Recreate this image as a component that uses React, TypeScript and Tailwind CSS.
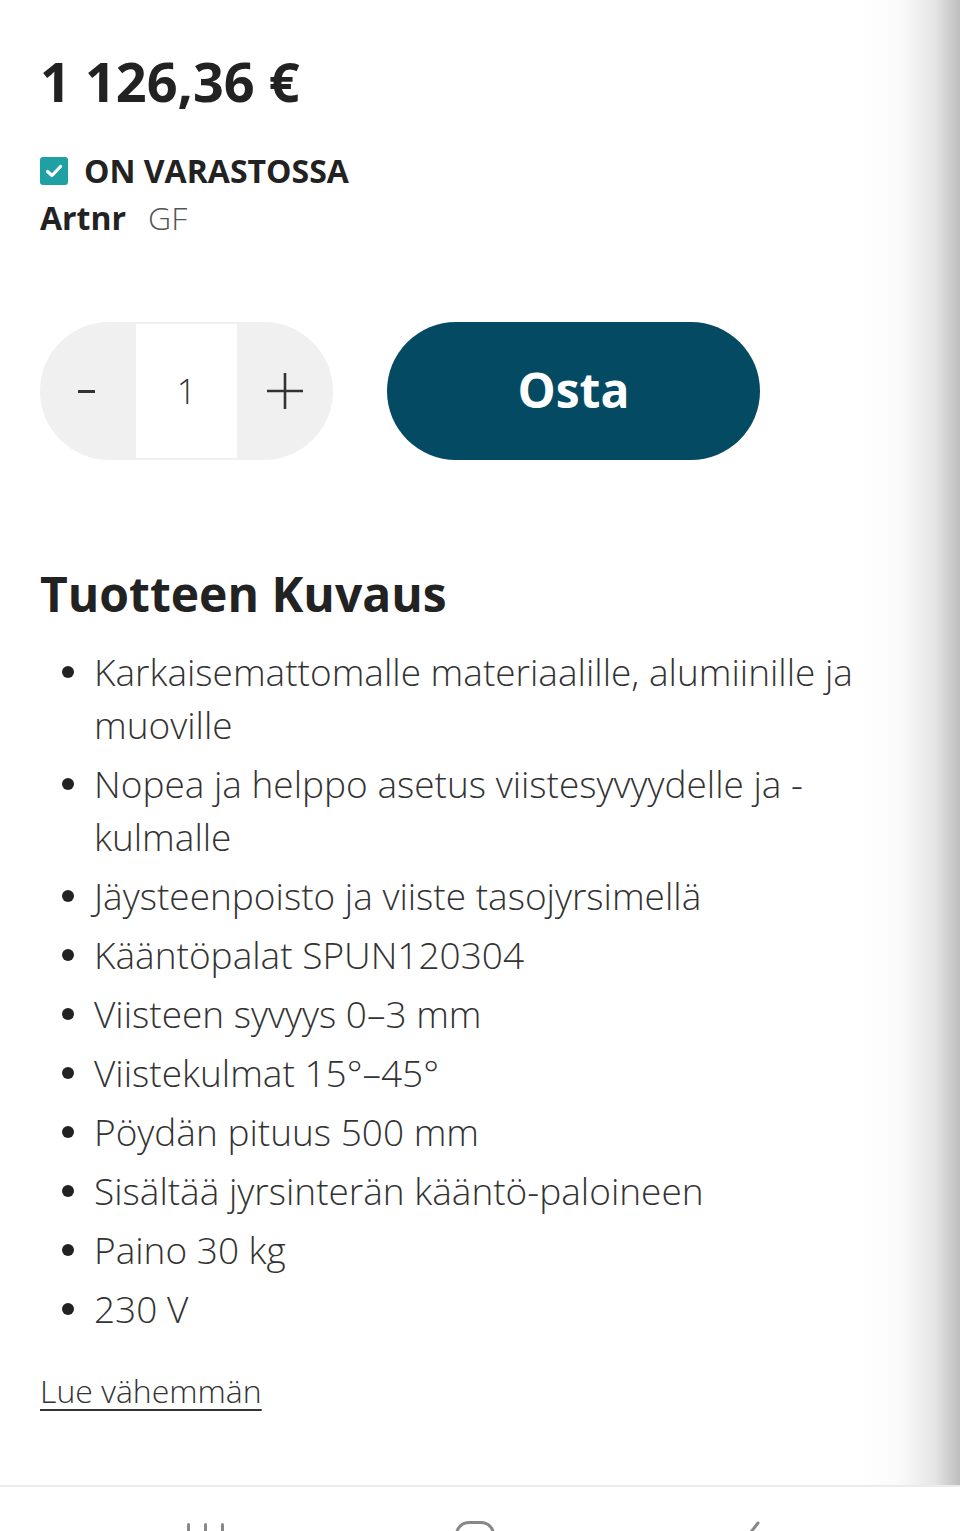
import React from "react";

const items: string[][] = [
  ["Karkaisemattomalle materiaalille, alumiinille ja", "muoville"],
  ["Nopea ja helppo asetus viistesyvyydelle ja -", "kulmalle"],
  ["Jäysteenpoisto ja viiste tasojyrsimellä"],
  ["Kääntöpalat SPUN120304"],
  ["Viisteen syvyys 0–3 mm"],
  ["Viistekulmat 15°–45°"],
  ["Pöydän pituus 500 mm"],
  ["Sisältää jyrsinterän kääntö-paloineen"],
  ["Paino 30 kg"],
  ["230 V"],
];

export default function App() {
  return (
    <div className="relative h-[1531px] w-[960px] overflow-hidden bg-white font-['Open_Sans',sans-serif] text-[#222]">
      <div className="flex h-[1485px] flex-col px-10">
        <div className="pt-[53px] text-[54px] font-bold leading-[56px]">1 126,36 €</div>

        <div className="mt-[44px] flex items-center gap-[16px]">
          <div className="flex h-[28px] w-[28px] items-center justify-center rounded-[3px] bg-[#1fa0a3]">
            <svg width="18" height="14" viewBox="0 0 18 14">
              <path d="M2.5 7.5 L7 11.5 L15.5 2.5" fill="none" stroke="white" strokeWidth="3.2" strokeLinecap="round" strokeLinejoin="round" />
            </svg>
          </div>
          <span className="text-[32px] font-bold leading-[36px]">ON VARASTOSSA</span>
        </div>
        <div className="mt-[11px] flex items-center gap-[22px] text-[32px] leading-[36px]">
          <span className="font-bold">Artnr</span>
          <span className="font-light text-[#555]">GF</span>
        </div>

        <div className="mt-[86px] flex items-center gap-[54px]">
          <div className="flex h-[138px] w-[293px] items-stretch overflow-hidden rounded-full bg-[#f0f0f0]">
            <div className="flex w-[96px] items-center justify-center">
              <div className="ml-[-4px] h-[3px] w-[17px] bg-[#333]" />
            </div>
            <div className="my-[2px] flex w-[101px] items-center justify-center bg-white text-[34px] font-light text-[#333]">1</div>
            <div className="flex flex-1 items-center justify-center">
              <svg width="38" height="38" viewBox="0 0 38 38">
                <path d="M19 1 V37 M1 19 H37" stroke="#333" strokeWidth="2.6" />
              </svg>
            </div>
          </div>
          <button className="flex h-[138px] w-[373px] items-center justify-center rounded-full bg-[#034a62] pb-[2px] text-[48px] font-bold text-white">
            Osta
          </button>
        </div>

        <h2 className="mt-[104px] text-[48px] font-bold leading-[60px]">Tuotteen Kuvaus</h2>

        <ul className="mt-[21px] flex flex-col gap-[6px]">
          {items.map((lines, i) => (
            <li key={i} className="flex items-start">
              <span className="flex h-[53px] w-[54px] shrink-0 items-center pl-[22px]">
                <span className="h-[12px] w-[12px] rounded-full bg-[#222]" />
              </span>
              <span className="text-[37px] font-light leading-[53px] text-[#333]">
                {lines.map((l, j) => (
                  <span key={j} className="block">{l}</span>
                ))}
              </span>
            </li>
          ))}
        </ul>

        <a className="mt-[34px] self-start text-[32px] font-light leading-[44px] text-[#333] underline decoration-[2px] underline-offset-[6px]">
          Lue vähemmän
        </a>
      </div>

      <div className="pointer-events-none absolute right-0 top-0 h-[1485px] w-[100px] bg-[linear-gradient(to_right,rgba(0,0,0,0)_0%,rgba(0,0,0,0.02)_40%,rgba(0,0,0,0.1)_75%,rgba(0,0,0,0.26)_100%)]" />

      <div className="relative h-[46px] border-t-2 border-[#ebebeb] bg-white">
        <div className="absolute left-[187px] top-[36px] flex gap-[14px]">
          <span className="h-[20px] w-[3px] rounded-sm bg-[#888]" />
          <span className="h-[20px] w-[3px] rounded-sm bg-[#888]" />
          <span className="h-[20px] w-[3px] rounded-sm bg-[#888]" />
        </div>
        <div className="absolute left-[455px] top-[34px] h-[38px] w-[40px] rounded-[14px] border-[3px] border-[#888]" />
        <svg className="absolute left-[740px] top-[34px]" width="24" height="40" viewBox="0 0 24 40">
          <path d="M18 2 L4 20 L18 38" fill="none" stroke="#888" strokeWidth="3" strokeLinecap="round" />
        </svg>
      </div>
    </div>
  );
}
